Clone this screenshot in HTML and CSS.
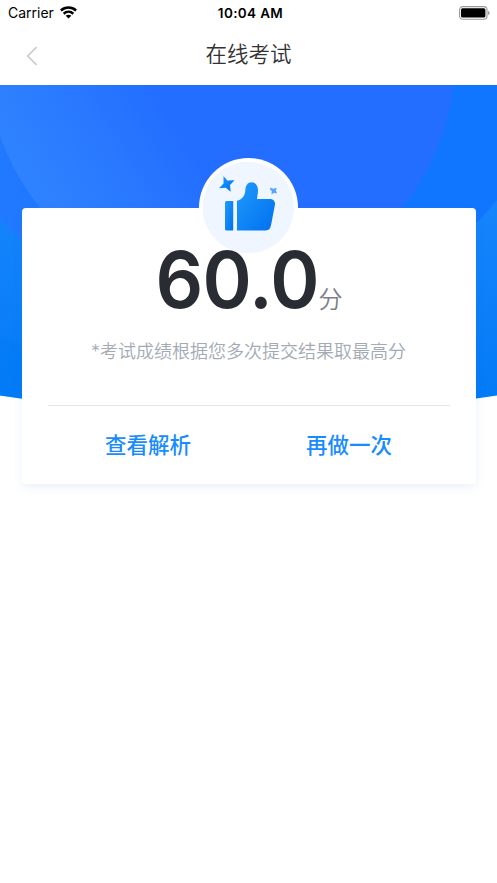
FILE: index.html
```html
<!DOCTYPE html>
<html lang="zh-CN">
<head>
<meta charset="utf-8">
<title>在线考试</title>
<link rel="stylesheet" href="styles.css">
</head>
<body>
<div class="status">
  <div class="carrier">Carrier
    <svg width="17" height="13" viewBox="0 0 17 13" fill="none" stroke="#000" stroke-width="2.5"><path d="M.9 4.500C5.200.5 11.800.5 16.100 4.500M3.700 7.700c2.800-2.500 6.800-2.500 9.600 0"/><path d="M5.700 9.800c1.600-1.400 4-1.400 5.600 0L8.500 12.600z" fill="#000" stroke="none"/></svg>
  </div>
  <div class="time">10:04 AM</div>
  <svg class="battery" width="32" height="14" viewBox="0 0 32 14"><rect x=".6" y=".6" width="27.4" height="12.6" rx="3.2" fill="none" stroke="#999" stroke-width="1.1"/><rect x="2" y="2.2" width="24.4" height="9.4" rx="1.5"/><path d="M29.2 4.800c1.800.7 1.800 3.700 0 4.400z" fill="#888"/></svg>
</div>
<header class="nav">
  <svg class="back" width="12" height="20" viewBox="0 0 12 20" fill="none" stroke="#c9cdd3" stroke-width="1.700"><path d="M10.600 1.200 1.700 10l8.900 8.800"/></svg>
  <h1>在线考试</h1>
</header>
<main class="result">
  <svg class="hero" width="497" height="330" viewBox="0 85 497 330">
    <defs>
      <linearGradient id="base" x1="0" y1="0" x2="0" y2="1"><stop offset=".35" stop-color="#1684fb"/><stop offset="1" stop-color="#0079f5"/></linearGradient>
      <linearGradient id="mid" gradientUnits="userSpaceOnUse" x1="0" y1="150" x2="240" y2="85"><stop stop-color="#2079ff"/><stop offset="1" stop-color="#1076ff"/></linearGradient>
      <linearGradient id="disc" gradientUnits="userSpaceOnUse" x1="15" y1="155" x2="145" y2="76"><stop stop-color="#2f82ff"/><stop offset=".55" stop-color="#2978ff"/><stop offset="1" stop-color="#236eff"/></linearGradient>
      <clipPath id="hero-shape"><path d="M0 85h497v310.500Q248.500 434 0 395.500z"/></clipPath>
    </defs>
    <g clip-path="url(#hero-shape)">
      <path d="M0 85h497v350H0z" fill="url(#base)"/>
      <path d="M0 337q120 42 248 42v60H0z" fill="#007af5" opacity=".3"/>
      <circle cx="240" cy="-10" r="332" fill="url(#mid)"/>
      <circle cx="221" cy="60" r="233.500" fill="url(#disc)"/>
    </g>
  </svg>
  <section class="card">
    <div class="badge">
      <svg width="98" height="98" viewBox="0 0 98 98">
        <defs><linearGradient id="thumb" x1="0" y1="0" x2="1" y2="1"><stop stop-color="#209bff"/><stop offset="1" stop-color="#0070ed"/></linearGradient></defs>
        <circle cx="49.300" cy="49.500" r="45.700" fill="#eff6ff"/>
        <g fill="url(#thumb)">
          <path d="M27.500 43h6.700v29.500h-6.700q-1.500 0-1.500-1.500V44.500q0-1.500 1.500-1.500z"/>
          <path d="M38 72.500V42.800c5-1.300 8-5 8.300-10.300.2-5 2.400-8.200 6.200-8.200 4.200 0 6.500 3.500 6.500 8.200 0 3-.7 5.500-1 8.500h12.500c4 0 6 2.600 5.400 6l-3.900 20.300c-.7 3.400-2.300 5.200-5.200 5.200z"/>
          <path d="M24.500 18l3.800 4.600 7.300-.4-4.600 4.800.7 6.800-5-4.100-6.700.5 4.500-4.700z"/>
          <path d="M71.500 29.500l2.700 1.200 3.600-1-1 2.900 1.300 3-2.900-.8-2.800 1.700.4-3.200-2.100-2.100z" opacity=".7"/>
        </g>
      </svg>
    </div>
    <div class="score"><strong>60.0</strong><span>分</span></div>
    <p class="note">*考试成绩根据您多次提交结果取最高分</p>
    <div class="actions"><a>查看解析</a><a>再做一次</a></div>
  </section>
</main>
</body>
</html>
```
FILE: styles.css
```css
* { box-sizing: border-box; }
body {
  margin: 0;
  min-height: 883px;
  background: #fff;
  font-family: Inter, "Noto Sans CJK SC", sans-serif;
}
svg { display: block; }
.status {
  height: 25px;
  padding: 0 6px 0 8px;
  display: grid;
  grid-template-columns: 1fr auto 1fr;
  align-items: center;
  color: #000;
  font-size: 14px;
}
.carrier { display: flex; gap: 6px; align-items: center; }
.carrier svg { margin-top: -1px; }
.time { padding-left: 2px; font-size: 13.500px; font-weight: 600; letter-spacing: .35px; }
.battery { justify-self: end; }
.nav {
  height: 60px;
  display: grid;
  grid-template-columns: 60px 1fr 60px;
  align-items: center;
}
.back { margin: 2px 0 0 26px; }
.nav h1 {
  margin: -2px 0 0;
  text-align: center;
  font-size: 21.500px;
  font-weight: 350;
  line-height: 32px;
  color: #333;
}
.result { position: relative; padding: 122.500px 21.500px 0; }
.hero { position: absolute; top: 0; left: 0; }
.card {
  position: relative;
  height: 276px;
  padding: 0 26px;
  border-radius: 4px;
  background: #fff;
  box-shadow: 0 3px 10px rgba(50, 120, 220, .1);
}
.badge {
  position: absolute;
  top: -49.500px;
  left: 177.500px;
  width: 99px;
  height: 99px;
  border-radius: 50%;
  background: #fff;
}
.score {
  position: relative;
  display: flex;
  justify-content: center;
  align-items: baseline;
  height: 128px;
  padding-top: 23px;
}
.score strong {
  margin-left: -9px;
  font-size: 79px;
  font-weight: 600;
  letter-spacing: -.7px;
  line-height: 96px;
  color: #292c33;
  transform: scaleX(.945);
  transform-origin: right;
}
.score span { font-size: 24px; font-weight: 350; color: #7b808a; }
.note {
  margin: 1px 0 0;
  text-align: center;
  font-size: 18px;
  line-height: 30px;
  font-weight: 350;
  color: #a3aab4;
}
.actions {
  height: 77px;
  margin-top: 38px;
  border-top: 1.500px solid #e6e6e8;
  display: grid;
  grid-template-columns: 1fr 1fr;
  align-items: center;
  text-align: center;
  color: #188cff;
  font-size: 21.500px;
  font-weight: 500;
}
```
